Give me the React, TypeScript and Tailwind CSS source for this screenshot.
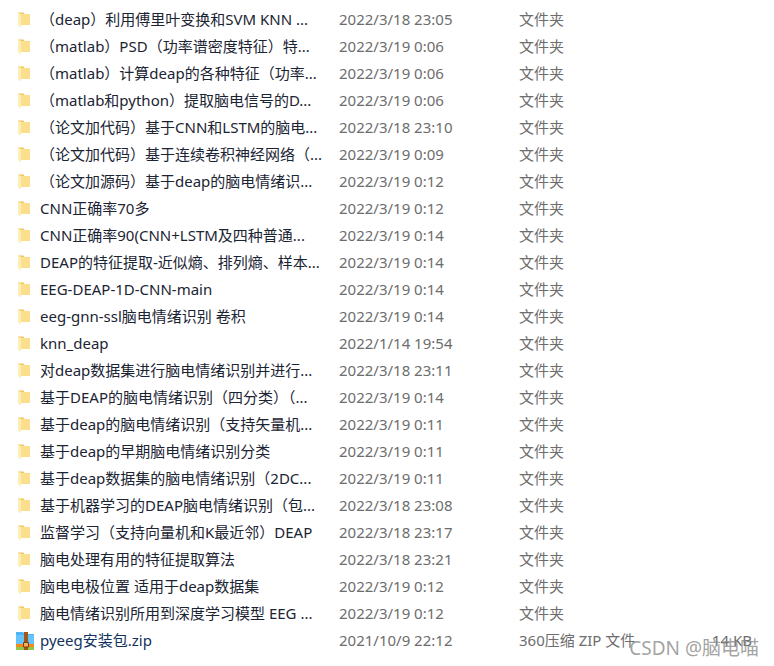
const FILES = [
  ['（deap）利用傅里叶变换和SVM KNN ...', '2022/3/18 23:05'],
  ['（matlab）PSD（功率谱密度特征）特...', '2022/3/19 0:06'],
  ['（matlab）计算deap的各种特征（功率...', '2022/3/19 0:06'],
  ['（matlab和python）提取脑电信号的D...', '2022/3/19 0:06'],
  ['（论文加代码）基于CNN和LSTM的脑电...', '2022/3/18 23:10'],
  ['（论文加代码）基于连续卷积神经网络（...', '2022/3/19 0:09'],
  ['（论文加源码）基于deap的脑电情绪识...', '2022/3/19 0:12'],
  ['CNN正确率70多', '2022/3/19 0:12'],
  ['CNN正确率90(CNN+LSTM及四种普通...', '2022/3/19 0:14'],
  ['DEAP的特征提取-近似熵、排列熵、样本...', '2022/3/19 0:14'],
  ['EEG-DEAP-1D-CNN-main', '2022/3/19 0:14'],
  ['eeg-gnn-ssl脑电情绪识别 卷积', '2022/3/19 0:14'],
  ['knn_deap', '2022/1/14 19:54'],
  ['对deap数据集进行脑电情绪识别并进行...', '2022/3/18 23:11'],
  ['基于DEAP的脑电情绪识别（四分类）（...', '2022/3/19 0:14'],
  ['基于deap的脑电情绪识别（支持矢量机...', '2022/3/19 0:11'],
  ['基于deap的早期脑电情绪识别分类', '2022/3/19 0:11'],
  ['基于deap数据集的脑电情绪识别（2DC...', '2022/3/19 0:11'],
  ['基于机器学习的DEAP脑电情绪识别（包...', '2022/3/18 23:08'],
  ['监督学习（支持向量机和K最近邻）DEAP', '2022/3/18 23:17'],
  ['脑电处理有用的特征提取算法', '2022/3/18 23:21'],
  ['脑电电极位置 适用于deap数据集', '2022/3/19 0:12'],
  ['脑电情绪识别所用到深度学习模型 EEG ...', '2022/3/19 0:12'],
]

function FolderIcon() {
  return (
    <svg width="14" height="18" viewBox="0 0 14 18" className="shrink-0">
      <path d="M1 1.5h5.5l1 1.5H13v11H1z" fill="#f0c65c" />
      <path d="M4 3h9v11H4z" fill="#fbdf8c" />
      <path d="M1 1.5 4 3v13.5l-3-2z" fill="#fdeeb8" />
    </svg>
  )
}

function ZipIcon() {
  return (
    <svg width="20" height="20" viewBox="0 0 20 20" className="shrink-0">
      <path d="M1 1h7l2 2h9v12H1z" fill="#4db5f5" />
      <path d="M1 4h18v10H1z" fill="#66c4fb" />
      <path d="M1 13h18v3H1z" fill="#f58a1a" />
      <path d="M1 16h18v3H1z" fill="#8cc84b" />
      <path d="M9 1h4v18H9z" fill="#a0561c" />
      <path d="M8.5 11.5h5v4.5h-5z" fill="#f0b060" stroke="#7a3f10" strokeWidth="1" />
    </svg>
  )
}

export default function App() {
  return (
    <div className="relative h-[666px] w-[774px] overflow-hidden bg-white pt-[6px] font-['Noto_Sans','Noto_Sans_CJK_SC',sans-serif] text-[15px]">
      {FILES.map(([name, date]) => (
        <div key={name} className="flex h-[27px] items-center">
          <div className="flex w-[40px] justify-end pr-[9px]">
            <FolderIcon />
          </div>
          <span className="w-[299px] whitespace-nowrap text-[#1b2433]">{name}</span>
          <span className="w-[180px] whitespace-nowrap text-[#6d6d6d]">{date}</span>
          <span className="whitespace-nowrap text-[#6d6d6d]">文件夹</span>
        </div>
      ))}
      <div className="flex h-[27px] items-center">
        <div className="flex w-[40px] justify-end pr-[5px]">
          <ZipIcon />
        </div>
        <span className="w-[299px] whitespace-nowrap text-[#12325e]">pyeeg安装包.zip</span>
        <span className="w-[180px] whitespace-nowrap text-[#6d6d6d]">2021/10/9 22:12</span>
        <span className="w-[193px] whitespace-nowrap text-[#6d6d6d]">360压缩 ZIP 文件</span>
        <span className="whitespace-nowrap text-[#6d6d6d]">14 KB</span>
      </div>
      <span className="absolute right-[15px] top-[635px] whitespace-nowrap text-[19px] leading-[26px] text-[#8a8a8a]/80">
        CSDN @脑电喵
      </span>
    </div>
  )
}
